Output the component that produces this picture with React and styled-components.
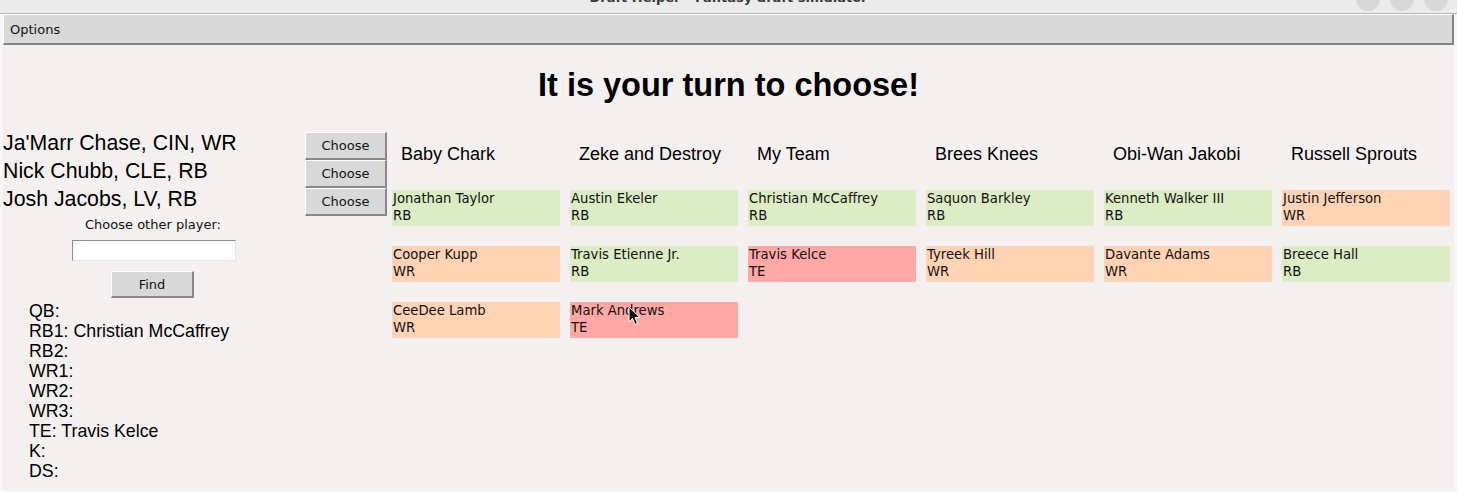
import React from "react";
import styled, { createGlobalStyle } from "styled-components";

const Global = createGlobalStyle`
  html, body { margin: 0; padding: 0; background: #f7f7f7; }
  body { width: 1457px; height: 492px; overflow: hidden; font-family: "DejaVu Sans", sans-serif; }
`;

const Window = styled.div`
  display: flex;
  flex-direction: column;
  height: 492px;
`;

const TitleBar = styled.div`
  height: 13px;
  background: #ebebeb;
  border-bottom: 1px solid #b6b6b6;
  display: grid;
  grid-template-columns: 1fr auto 1fr;
  overflow: hidden;
`;

const TitleText = styled.div`
  grid-column: 2;
  font: bold 13px "DejaVu Sans", sans-serif;
  line-height: 16px;
  margin-top: -10px;
  color: #3a3a3a;
  white-space: nowrap;
`;

const WinButtons = styled.div`
  grid-column: 3;
  justify-self: end;
  display: flex;
  gap: 10px;
  padding-right: 9px;
  margin-top: -13px;
`;

const WinButton = styled.span`
  width: 24px;
  height: 24px;
  border-radius: 50%;
  background: #d8d8d8;
`;

const MenuBar = styled.div`
  margin: 0 3px;
  height: 28px;
  background: #d9d9d9;
  border-top: 1px solid #ffffff;
  border-left: 1px solid #ffffff;
  border-bottom: 2px solid #828282;
  border-right: 2px solid #828282;
  display: flex;
  align-items: center;
  padding-left: 6px;
  font: 13px "DejaVu Sans", sans-serif;
  color: #111;
`;

const Main = styled.main`
  margin: 0 3px;
  flex: 1;
  background: #f4f0ef;
  padding-top: 20px;
  margin-bottom: 2px;
`;

const Heading = styled.h1`
  margin: 0;
  text-align: center;
  font: bold 32.5px "Liberation Sans", Arial, sans-serif;
  line-height: 40px;
  color: #000;
`;

const Content = styled.div`
  display: flex;
  align-items: flex-start;
  margin-top: 24px;
`;

const LeftCol = styled.div`
  width: 300px;
  display: flex;
  flex-direction: column;
`;

const Suggestion = styled.div`
  font: 21.3px "Liberation Sans", Arial, sans-serif;
  line-height: 28px;
  color: #000;
  white-space: nowrap;
`;

const Label = styled.div`
  margin-top: 3px;
  text-align: center;
  font: 13px "DejaVu Sans", sans-serif;
  line-height: 18px;
  color: #111;
`;

const Entry = styled.input`
  align-self: center;
  margin: 6px 0 0 2px;
  width: 164px;
  height: 21px;
  box-sizing: border-box;
  background: #fff;
  border-top: 1px solid #8c8c8c;
  border-left: 1px solid #8c8c8c;
  border-bottom: 1px solid #e4e4e4;
  border-right: 1px solid #e4e4e4;
  outline: none;
  padding: 0 2px;
`;

const TkButton = styled.button`
  box-sizing: border-box;
  width: ${(p) => p.$w}px;
  height: ${(p) => p.$h}px;
  background: #d9d9d9;
  border-top: 1px solid #ffffff;
  border-left: 1px solid #ffffff;
  border-bottom: 2px solid #888888;
  border-right: 2px solid #888888;
  font: 13px "DejaVu Sans", sans-serif;
  color: #111;
  padding: 0;
  cursor: default;
`;

const FindRow = styled.div`
  margin-top: 10px;
  display: flex;
  justify-content: center;
  padding-right: 1px;
`;

const Roster = styled.div`
  margin-top: 3px;
  padding-left: 26px;
  font: 17.8px "Liberation Sans", Arial, sans-serif;
  line-height: 20px;
  color: #000;
`;

const ButtonCol = styled.div`
  margin-left: 2px;
  padding-top: 3px;
  display: flex;
  flex-direction: column;
`;

const Board = styled.div`
  margin-left: 5px;
  display: grid;
  grid-template-columns: repeat(6, 168px);
  column-gap: 10px;
`;

const TeamCol = styled.div`
  display: flex;
  flex-direction: column;
  gap: 20px;
`;

const TeamName = styled.div`
  padding: 14px 0 0 9px;
  height: 22px;
  margin-bottom: 5px;
  font: 18px "Liberation Sans", Arial, sans-serif;
  line-height: 22px;
  color: #000;
  white-space: nowrap;
`;

const posColors = { RB: "#dcecc4", WR: "#ffd3b4", TE: "#ffa8a5" };

const Card = styled.div`
  position: relative;
  height: 36px;
  padding-left: 1px;
  background: ${(p) => posColors[p.$pos]};
  font: 13.2px "DejaVu Sans", sans-serif;
  line-height: 17px;
  color: #111;
  white-space: nowrap;
`;

const Cursor = styled.svg`
  position: absolute;
  left: 58px;
  top: 4px;
`;

const teams = [
  { name: "Baby Chark", picks: [["Jonathan Taylor", "RB"], ["Cooper Kupp", "WR"], ["CeeDee Lamb", "WR"]] },
  { name: "Zeke and Destroy", picks: [["Austin Ekeler", "RB"], ["Travis Etienne Jr.", "RB"], ["Mark Andrews", "TE"]] },
  { name: "My Team", picks: [["Christian McCaffrey", "RB"], ["Travis Kelce", "TE"]] },
  { name: "Brees Knees", picks: [["Saquon Barkley", "RB"], ["Tyreek Hill", "WR"]] },
  { name: "Obi-Wan Jakobi", picks: [["Kenneth Walker III", "RB"], ["Davante Adams", "WR"]] },
  { name: "Russell Sprouts", picks: [["Justin Jefferson", "WR"], ["Breece Hall", "RB"]] },
];

const suggestions = ["Ja'Marr Chase, CIN, WR", "Nick Chubb, CLE, RB", "Josh Jacobs, LV, RB"];

const roster = [
  "QB:",
  "RB1: Christian McCaffrey",
  "RB2:",
  "WR1:",
  "WR2:",
  "WR3:",
  "TE: Travis Kelce",
  "K:",
  "DS:",
];

export default function App() {
  return (
    <Window>
      <Global />
      <TitleBar>
        <TitleText>Draft Helper - Fantasy draft simulator</TitleText>
        <WinButtons>
          <WinButton />
          <WinButton />
          <WinButton />
        </WinButtons>
      </TitleBar>
      <MenuBar>Options</MenuBar>
      <Main>
        <Heading>It is your turn to choose!</Heading>
        <Content>
          <LeftCol>
            {suggestions.map((s) => (
              <Suggestion key={s}>{s}</Suggestion>
            ))}
            <Label>Choose other player:</Label>
            <Entry />
            <FindRow>
              <TkButton $w={83} $h={27}>Find</TkButton>
            </FindRow>
            <Roster>
              {roster.map((r) => (
                <div key={r}>{r}</div>
              ))}
            </Roster>
          </LeftCol>
          <ButtonCol>
            {suggestions.map((s) => (
              <TkButton key={s} $w={82} $h={28}>Choose</TkButton>
            ))}
          </ButtonCol>
          <Board>
            {teams.map((t) => (
              <TeamCol key={t.name}>
                <TeamName>{t.name}</TeamName>
                {t.picks.map(([n, p]) => (
                  <Card key={n} $pos={p}>
                    {n}
                    <br />
                    {p}
                    {n === "Mark Andrews" && (
                      <Cursor width="13" height="20" viewBox="0 0 13 20">
                        <path d="M1 1 L1 16 L4.5 12.5 L7 18.5 L9.5 17.5 L7 11.5 L12 11.5 Z" fill="#111" stroke="#fff" strokeWidth="1" />
                      </Cursor>
                    )}
                  </Card>
                ))}
              </TeamCol>
            ))}
          </Board>
        </Content>
      </Main>
    </Window>
  );
}
